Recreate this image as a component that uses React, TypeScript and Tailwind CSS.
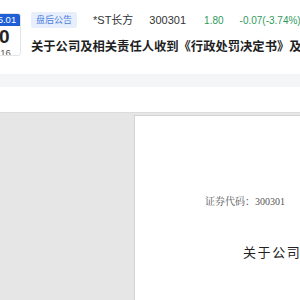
export default function App() {
  return (
    <div
      className="w-[300px] h-[300px] overflow-hidden bg-white flex flex-col"
      style={{ fontFamily: '"Liberation Sans", "Noto Sans CJK SC", sans-serif' }}
    >
      {/* header */}
      <div className="flex items-start gap-[10px] pt-[12px] h-[74px]">
        <div className="ml-[-23px] mt-[1px] w-[44px] h-[43px] shrink-0 border border-[#e2e4e8] rounded-[3px] overflow-hidden flex flex-col items-center">
          <div className="w-full h-[12px] bg-[#1f5fd6] text-white text-[9.5px] leading-[12px] text-center">2025.01</div>
          <div className="text-[19px] leading-[18px] font-bold text-[#222] mt-[2px]">30</div>
          <div className="text-[9.5px] leading-[12px] text-[#555] mt-[1px]">15:16</div>
        </div>
        <div className="flex flex-col gap-[12px] whitespace-nowrap">
          <div className="flex items-center h-[16px]">
            <span className="h-[16px] px-[5px] bg-[#e8effc] text-[#4b7fdc] text-[9px] leading-[16px] rounded-[2px]">盘后公告</span>
            <span className="ml-[16px] text-[11px] text-[#333]">*ST长方</span>
            <span className="ml-[16px] text-[11px] text-[#333]">300301</span>
            <span className="ml-[18px] text-[10px] text-[#2f9a5a]">1.80</span>
            <span className="ml-[16px] text-[10px] text-[#2f9a5a]">-0.07(-3.74%)</span>
          </div>
          <div className="text-[12.3px] leading-[14px] font-bold text-[#1f1f1f]">
            关于公司及相关责任人收到《行政处罚决定书》及公告
          </div>
        </div>
      </div>
      <div className="h-[13px] bg-[#f4f5f7] shrink-0" />
      <div className="h-[25px] shrink-0" />
      {/* viewer */}
      <div className="flex-1 bg-[#e6e6e6] border-t border-[#dcdcdc] pl-[134px] pt-[2px]">
        <div className="h-full bg-white border-l border-t border-[#d4d4d4] pt-[79px]">
          <div
            className="pl-[70px] text-[10px] leading-[14px] text-[#555] whitespace-nowrap"
            style={{ fontFamily: '"Liberation Serif", "Noto Serif CJK SC", "Noto Sans CJK SC", serif' }}
          >
            证券代码：300301
          </div>
          <div className="pl-[108px] mt-[34px] text-[13px] leading-[18px] tracking-[1.6px] text-[#222] whitespace-nowrap" style={{ fontFamily: '"Noto Sans CJK SC", sans-serif' }}>
            关于公司及相关责任人
          </div>
        </div>
      </div>
    </div>
  );
}
